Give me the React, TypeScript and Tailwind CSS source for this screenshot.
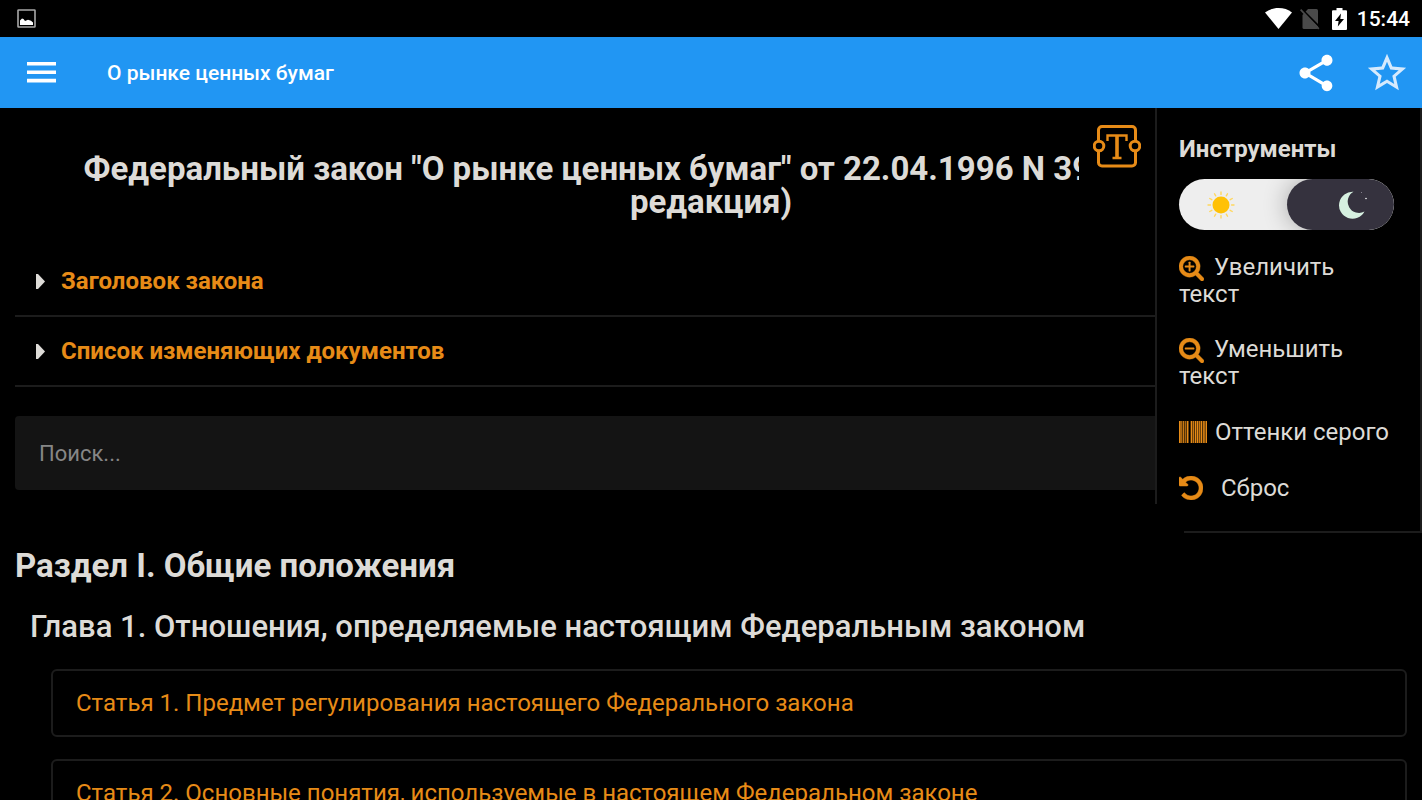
import { useState } from "react";
import { MdShare, MdStarBorder } from "react-icons/md";

type Article = {
  id: number;
  title: string;
};

const articles: Article[] = [
  { id: 1, title: "Статья 1. Предмет регулирования настоящего Федерального закона" },
  { id: 2, title: "Статья 2. Основные понятия, используемые в настоящем Федеральном законе" },
];

const summaries = ["Заголовок закона", "Список изменяющих документов"];

const sunRays = [0, 30, 60, 90, 120, 150, 180, 210, 240, 270, 300, 330];

const lensPath =
  "M1216 832q0-185-131.5-316.5t-316.5-131.5-316.5 131.5-131.5 316.5 131.5 316.5 316.5 131.5 316.5-131.5 131.5-316.5zm512 832q0 53-37.5 90.5t-90.5 37.5q-54 0-90-38l-343-342q-179 124-399 124-143 0-273.5-55.5t-225-150-150-225-55.5-273.5 55.5-273.5 150-225 225-150 273.5-55.5 273.5 55.5 225 150 150 225 55.5 273.5q0 220-124 399l343 343q37 37 37 90z";

function ZoomIcon({ plus = false }: { plus?: boolean }) {
  return (
    <svg viewBox="64 128 1664 1664" className="mr-2.5 inline-block size-[25px] align-middle" fill="#e78b17" aria-hidden="true">
      <path d={lensPath} stroke="#e78b17" strokeWidth="24" />
      <rect x="448" y="768" width="640" height="128" rx="32" />
      {plus && <rect x="704" y="512" width="128" height="640" rx="32" />}
    </svg>
  );
}

function BarcodeIcon() {
  return (
    <svg viewBox="0 0 28 22" className="mr-2 h-[22px] w-7" fill="#e78b17" aria-hidden="true">
      <rect width="28" height="22" opacity="0.35" />
      <path d="M0 0h1.6v22H0zM2.4 0h.7v22h-.7zM4 0h.8v22H4zM6.2 0h.6v22h-.6zM8 0h1.4v22H8zM11.800 0h1.400v22h-1.400zM14 0h.8v22H14zM16 0h1.200v22H16zM18 0h1.200v22H18zM20.200 0h.8v22h-.8zM21.800 0h1.200v22h-1.200zM24 0h.8v22H24zM25.400 0h.7v22h-.7zM26.800 0H28v22h-1.200z" />
      <path d="M9.800 0h1.500v22H9.800z" fill="#000" />
    </svg>
  );
}

function ResetIcon() {
  return (
    <svg viewBox="128 128 1536 1536" className="mr-[18px] size-6" fill="#e78b17" aria-hidden="true">
      <path
        stroke="#e78b17"
        strokeWidth="32"
        d="M1664 896q0 156-61 298t-164 245-245 164-298 61q-172 0-327-72.5t-264-204.5q-7-10-6.5-22.5t8.5-20.5l137-138q10-9 25-9 16 2 23 12 73 95 179 147t225 52q104 0 198.5-40.5t163.5-109.5 109.5-163.5 40.5-198.5-40.5-198.5-109.5-163.5-163.5-109.5-198.5-40.5q-98 0-188 35.5t-160 101.5l137 138q31 30 14 69-17 40-59 40h-448q-26 0-45-19t-19-45v-448q0-42 40-59 39-17 69 14l130 129q107-101 244.5-156.5t284.5-55.5q156 0 298 61t245 164 164 245 61 298z"
      />
    </svg>
  );
}

function StatusBar() {
  return (
    <div className="flex h-[37px] shrink-0 items-center justify-between bg-black pr-3 pl-[17px]">
      <svg viewBox="0 0 19 19" className="size-[19px]" aria-hidden="true">
        <rect x="1" y="1" width="17" height="17" rx="0.6" fill="none" stroke="#a8a8a8" strokeWidth="1.6" />
        <path d="M3 16V11.5l2-2 1.5.5 1.5 2 3-1.2 3 1 2 1.7V16z" fill="#fff" />
      </svg>
      <div className="flex items-center">
        <svg viewBox="0 0 27 21" className="h-[21px] w-[27px]" fill="#fff" aria-hidden="true">
          <path d="M13.5 21 0 4.4C3.8 1.5 8.4 0 13.5 0S23.2 1.5 27 4.4z" />
        </svg>
        <svg viewBox="0 0 20 22" className="ml-2 h-[22px] w-5" aria-hidden="true">
          <path d="M8 1h8.5a1.5 1.5 0 0 1 1.5 1.5V19.5a1.5 1.5 0 0 1-1.5 1.5H4a1.5 1.5 0 0 1-1.5-1.5V7z" fill="#4a4a4a" />
          <path d="M1.6.8 20.6 19.8" stroke="#000" strokeWidth="1.8" />
          <path d="M.6 1.6 18.8 20.8" stroke="#4a4a4a" strokeWidth="1.8" />
        </svg>
        <svg viewBox="0 0 15 22" className="ml-3 h-[22px] w-[15px]" aria-hidden="true">
          <path d="M4.5 0h6v2.2H14a1 1 0 0 1 1 1V21a1 1 0 0 1-1 1H1a1 1 0 0 1-1-1V3.2a1 1 0 0 1 1-1h3.5z" fill="#fff" />
          <path d="M9 5.5 3 13h3.6L5.8 18.5l6.2-7.5H8.3z" fill="#000" />
        </svg>
        <time className="ml-2.5 text-[21px] leading-7 font-medium text-white">15:44</time>
      </div>
    </div>
  );
}

function AppBar() {
  const [starred, setStarred] = useState(false);

  return (
    <header className="flex h-[71px] shrink-0 items-center bg-[#2196f3] pr-3 pl-[27px] text-white">
      <button type="button" aria-label="Меню">
        <svg viewBox="0 0 29 21" className="h-[21px] w-[29px]" fill="#fff" aria-hidden="true">
          <path d="M0 0h29v3.6H0zM0 8.4h29v3.6H0zM0 16.8h29v3.6H0z" />
        </svg>
      </button>
      <div className="ml-[51px] flex-1 text-[21px] leading-7 font-medium">О рынке ценных бумаг</div>
      <button type="button" aria-label="Поделиться">
        <MdShare className="size-11" />
      </button>
      <button
        type="button"
        aria-label="В избранное"
        aria-pressed={starred}
        onClick={() => setStarred((current) => !current)}
        className="ml-[26px]"
      >
        <MdStarBorder className="size-[46px] text-[#d6eafd]" />
      </button>
    </header>
  );
}

function ThemeSwitch() {
  const [dark, setDark] = useState(true);

  return (
    <label className="flex h-[51px] overflow-hidden rounded-full bg-[#eeeeee]">
      <input
        type="checkbox"
        role="switch"
        aria-label="Ночной режим"
        checked={dark}
        onChange={(event) => setDark(event.target.checked)}
        className="sr-only"
      />
      <span className="flex flex-1 items-center pl-7">
        <svg viewBox="-14 -14 28 28" className="size-7" aria-hidden="true">
          <circle r="8.5" fill="#ffc107" />
          {sunRays.map((angle) => (
            <path key={angle} d="M0-10.6V-13" transform={`rotate(${angle})`} stroke="#ffd75e" strokeWidth="1.4" strokeLinecap="round" />
          ))}
        </svg>
      </span>
      <span className="flex flex-1 items-center justify-end rounded-full bg-[#35323e] pr-[27px] shadow-[0_0_24px_rgba(0,0,0,0.3)]">
        <svg viewBox="0 0 28 28" className="size-7" aria-hidden="true">
          <path d="M14.5.8A13.5 13.5 0 1 0 25.5 20.5 10.5 10.5 0 0 1 14.5.8z" fill="#d6f0e0" />
          <circle cx="27" cy="7.5" r="0.8" fill="#fff" />
          <circle cx="22.5" cy="1.5" r="0.5" fill="#9d9ba6" />
        </svg>
      </span>
    </label>
  );
}

function Tools() {
  return (
    <aside className="relative w-[267px] border-2 border-t-0 border-[#1c1c1c] bg-black pt-[27px] pr-[26px] pb-[29px] pl-[22px] text-2xl leading-7 text-[#dddbd7] after:absolute after:-bottom-0.5 after:-left-0.5 after:size-[29px] after:bg-black">
      <h2 className="mb-4 font-bold">Инструменты</h2>
      <ThemeSwitch />
      <div className="mt-6 flex flex-col gap-7 leading-[27px]">
        <button type="button" className="text-left">
          <ZoomIcon plus />
          Увеличить текст
        </button>
        <button type="button" className="text-left">
          <ZoomIcon />
          Уменьшить текст
        </button>
        <button type="button" className="flex items-center leading-7 whitespace-nowrap">
          <BarcodeIcon />
          Оттенки серого
        </button>
        <button type="button" className="flex items-center leading-7">
          <ResetIcon />
          Сброс
        </button>
      </div>
    </aside>
  );
}

function ToolsToggle({ onClick }: { onClick: () => void }) {
  return (
    <button type="button" aria-label="Инструменты" onClick={onClick} className="flex h-20 w-[76px] justify-center bg-black pt-[17px]">
      <svg viewBox="0 0 48 43" className="h-[43px] w-12" fill="none" stroke="#e78b17" strokeWidth="3" aria-hidden="true">
        <path d="M5.5 16V5a3.5 3.5 0 0 1 3.5-3.500h30A3.5 3.5 0 0 1 42.5 5v11M42.5 26v11.500A3.5 3.5 0 0 1 39 41H9a3.5 3.5 0 0 1-3.500-3.500V26" />
        <circle cx="6" cy="21" r="4.8" />
        <circle cx="42" cy="21" r="4.8" />
        <path d="M14.5 16V10.500h19V16M19.500 33h9" strokeWidth="2.400" />
        <path d="M24 10.500V33" strokeWidth="3.600" />
      </svg>
    </button>
  );
}

export default function App() {
  const [query, setQuery] = useState("");
  const [toolsOpen, setToolsOpen] = useState(true);

  const found = articles.filter((article) => article.title.toLowerCase().includes(query.toLowerCase()));

  return (
    <div className="flex h-screen flex-col overflow-hidden bg-black font-[Roboto,sans-serif] text-[#dddbd7]">
      <StatusBar />
      <AppBar />
      <div className="relative min-h-0 flex-1">
        <main className="h-full overflow-y-auto px-[15px] pt-11 [scrollbar-width:none]">
          <h1 className="mb-[29px] px-10 text-center text-[33px] leading-[33px] font-bold">
            Федеральный закон "О рынке ценных бумаг" от 22.04.1996 N 39-ФЗ (последняя редакция)
          </h1>

          {summaries.map((summary) => (
            <details key={summary} className="group border-b-2 border-[#1c1c1c]">
              <summary className="flex h-[68px] cursor-pointer list-none items-center pl-[21px] text-2xl font-bold text-[#e78b17]">
                <svg viewBox="0 0 9 15" className="mr-4 h-[15px] w-[9px] group-open:rotate-90" fill="#dddbd7" aria-hidden="true">
                  <path d="M0 0h2L9 7.500 2 15H0z" />
                </svg>
                {summary}
              </summary>
            </details>
          ))}

          <input
            type="search"
            aria-label="Поиск"
            placeholder="Поиск..."
            value={query}
            onChange={(event) => setQuery(event.target.value)}
            className="mt-[29px] block h-[74px] w-full rounded bg-[#141414] px-6 text-[22px] outline-none placeholder:text-[#868686]"
          />

          <h2 className="mt-14 text-[33px] leading-10 font-bold">Раздел I. Общие положения</h2>
          <h3 className="mt-[21px] pl-[15px] text-[31px] leading-10 font-medium">
            Глава 1. Отношения, определяемые настоящим Федеральным законом
          </h3>

          <ul className="mt-[22px] flex flex-col gap-[22px] pb-6 pl-9">
            {found.map((article) => (
              <li key={article.id}>
                <a
                  href={`#article-${article.id}`}
                  className="flex h-[68px] items-center rounded-md border-2 border-[#1c1c1c] px-[23px] text-2xl text-[#e78b17]"
                >
                  {article.title}
                </a>
              </li>
            ))}
          </ul>
        </main>

        <div className="absolute top-0 right-0 flex items-start">
          <ToolsToggle onClick={() => setToolsOpen((current) => !current)} />
          {toolsOpen && <Tools />}
        </div>
      </div>
    </div>
  );
}
